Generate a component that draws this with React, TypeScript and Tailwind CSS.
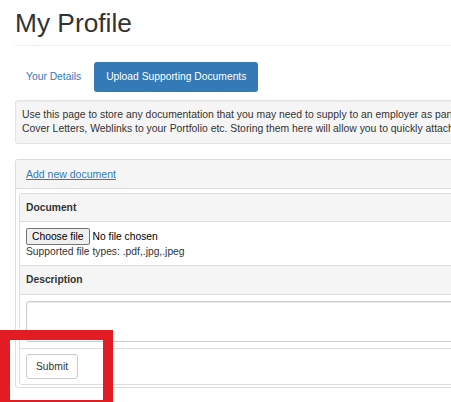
export default function App() {
  return (
    <div className="relative h-[402px] w-full overflow-hidden bg-white font-['Liberation_Sans',Arial,sans-serif] text-[10.3px] leading-[14.7px] text-[#333]">
      <div className="w-[640px] pl-[15px]">
        <div className="border-b border-[#eee] pb-[7px] pt-[9px]">
          <h1 className="text-[26.3px] leading-[29px] font-normal text-[#333]">My Profile</h1>
        </div>

        <ul className="mt-[16px] flex">
          <li>
            <a href="#" className="block h-[30px] rounded-[3px] px-[11px] leading-[30px] text-[#337ab7]">
              Your Details
            </a>
          </li>
          <li className="ml-[2px]">
            <a href="#" className="block h-[30px] rounded-[3px] bg-[#337ab7] px-[12px] leading-[30px] text-white">
              Upload Supporting Documents
            </a>
          </li>
        </ul>

        <div className="mt-[8px] whitespace-nowrap rounded-[3px] border border-[#e3e3e3] bg-[#f5f5f5] px-[6px] py-[6.5px] text-[10.4px] shadow-[inset_0_1px_1px_rgba(0,0,0,0.05)]">
          Use this page to store any documentation that you may need to supply to an employer as part of an application, such as CVs,
          <br />
          Cover Letters, Weblinks to your Portfolio etc. Storing them here will allow you to quickly attach them to your applications.
        </div>

        <div className="mt-[15px] rounded-[3px] border border-[#ddd] bg-white">
          <div className="flex h-[29px] items-center border-b border-[#ddd] bg-[#f5f5f5] px-[10px]">
            <a href="#" className="text-[10.5px] text-[#337ab7] underline">
              Add new document
            </a>
          </div>
          <div className="px-[3px] pb-[2px] pt-[4px]">
            <div className="rounded-[3px] border border-[#ddd]">
              <div className="flex h-[28px] items-center border-b border-[#ddd] bg-[#f5f5f5] px-[6px] font-bold">
                Document
              </div>
              <div className="px-[6px] pb-[7px] pt-[6px]">
                <div className="flex items-center">
                  <span className="h-[17px] rounded-[2px] border border-[#767676] bg-[#efefef] px-[5px] text-[10.3px] leading-[15px] text-black">
                    Choose file
                  </span>
                  <span className="ml-[3px] leading-[17px] text-black">No file chosen</span>
                </div>
                <div className="leading-[13px]">Supported file types: .pdf,.jpg,.jpeg</div>
              </div>
              <div className="flex h-[30px] items-center border-y border-[#ddd] bg-[#f5f5f5] px-[6px] font-bold">
                Description
              </div>
              <div className="px-[6px] pb-[6px] pt-[6px]">
                <div className="h-[41px] rounded-[3px] border border-[#ccc] bg-white shadow-[inset_0_1px_1px_rgba(0,0,0,0.075)]" />
              </div>
              <div className="border-t border-[#ddd] px-[6px] pb-[5px] pt-[5px]">
                <button
                  type="button"
                  className="h-[25px] rounded-[3px] border border-[#ccc] bg-white px-[9px] text-[10.3px] text-[#333]"
                >
                  Submit
                </button>
              </div>
            </div>
          </div>
        </div>
      </div>

      <div className="absolute left-0 top-[330px] h-[80px] w-[113px] border-[10px] border-[#e31b23]" />
    </div>
  );
}
